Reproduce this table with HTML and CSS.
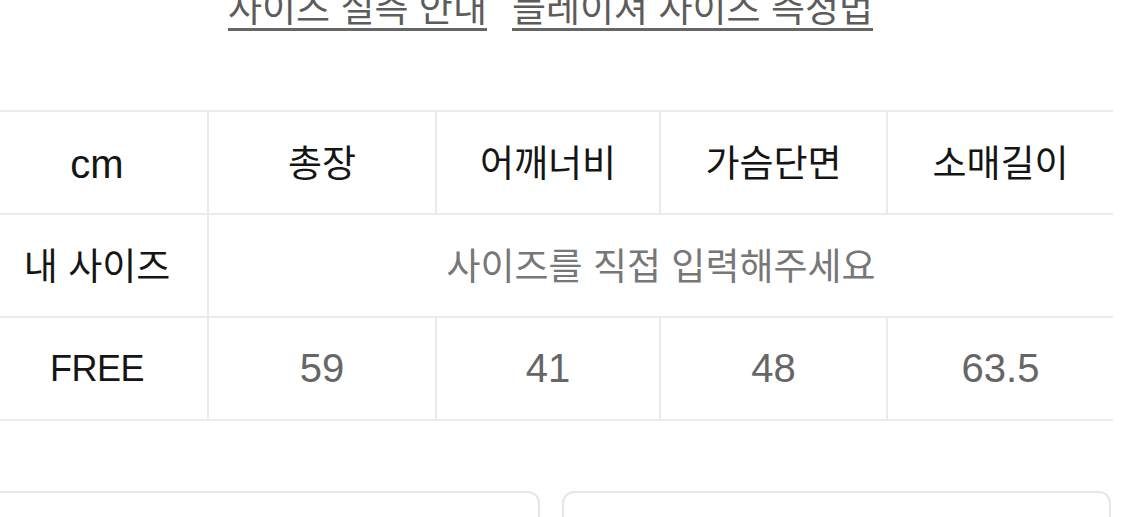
FILE: index.html
```html
<!DOCTYPE html>
<html lang="ko">
<head>
<meta charset="utf-8">
<title>사이즈 실측 안내</title>
<link rel="stylesheet" href="styles.css">
</head>
<body>
<div class="page">
  <nav class="links">
    <a class="link" href="#">사이즈 실측 안내</a>
    <a class="link" href="#">블레이져 사이즈 측정법</a>
  </nav>
  <div class="size-table">
    <div class="cell head latin">cm</div>
    <div class="cell head ko">총장</div>
    <div class="cell head ko">어깨너비</div>
    <div class="cell head ko">가슴단면</div>
    <div class="cell head ko last">소매길이</div>

    <div class="cell head ko">내 사이즈</div>
    <div class="cell placeholder ko span4 last">사이즈를 직접 입력해주세요</div>

    <div class="cell head free">FREE</div>
    <div class="cell num">59</div>
    <div class="cell num">41</div>
    <div class="cell num">48</div>
    <div class="cell num last">63.5</div>
  </div>
  <div class="boxes">
    <div class="box"></div>
    <div class="box"></div>
  </div>
</div>
</body>
</html>
```

FILE: styles.css
```css
html, body {
  margin: 0;
  padding: 0;
  background: #ffffff;
  overflow: hidden;
}

body {
  font-family: "Liberation Sans", "Noto Sans CJK KR", sans-serif;
  color: #111111;
}

.page {
  width: 1126px;
  margin-left: -13px;
}

.links {
  display: flex;
  justify-content: center;
  gap: 25px;
  margin-top: -13px;
  padding-left: 1px;
}

.link {
  font-family: "Noto Sans CJK KR", sans-serif;
  font-size: 37px;
  line-height: 38px;
  color: #5c5c5c;
  text-decoration: none;
  padding-bottom: 3px;
  border-bottom: 3px solid #666666;
}

.size-table {
  display: grid;
  grid-template-columns: 222px 228px 224px 227px 225px;
  margin-top: 79px;
  border-top: 2px solid #ebebeb;
}

.cell {
  height: 101px;
  display: flex;
  align-items: center;
  justify-content: center;
  border-bottom: 2px solid #ebebeb;
  border-right: 2px solid #ebebeb;
  white-space: nowrap;
}

.cell.last {
  border-right: none;
}

.span4 {
  grid-column: span 4;
}

.ko {
  font-family: "Noto Sans CJK KR", sans-serif;
  font-size: 37px;
  padding-bottom: 4px;
  box-sizing: border-box;
  height: 103px;
}

.head {
  color: #151515;
}

.latin {
  font-size: 40px;
  padding-top: 4px;
  box-sizing: border-box;
  height: 103px;
}

.free {
  font-size: 36px;
  letter-spacing: -0.5px;
}

.num {
  font-size: 40px;
  color: #666666;
}

.placeholder {
  color: #777777;
}

.boxes {
  display: flex;
  gap: 22px;
  margin-top: 70px;
  padding: 0 2px 0 4px;
}

.box {
  flex: 1;
  height: 120px;
  border: 2px solid #e6e6e6;
  border-radius: 12px;
}
```
